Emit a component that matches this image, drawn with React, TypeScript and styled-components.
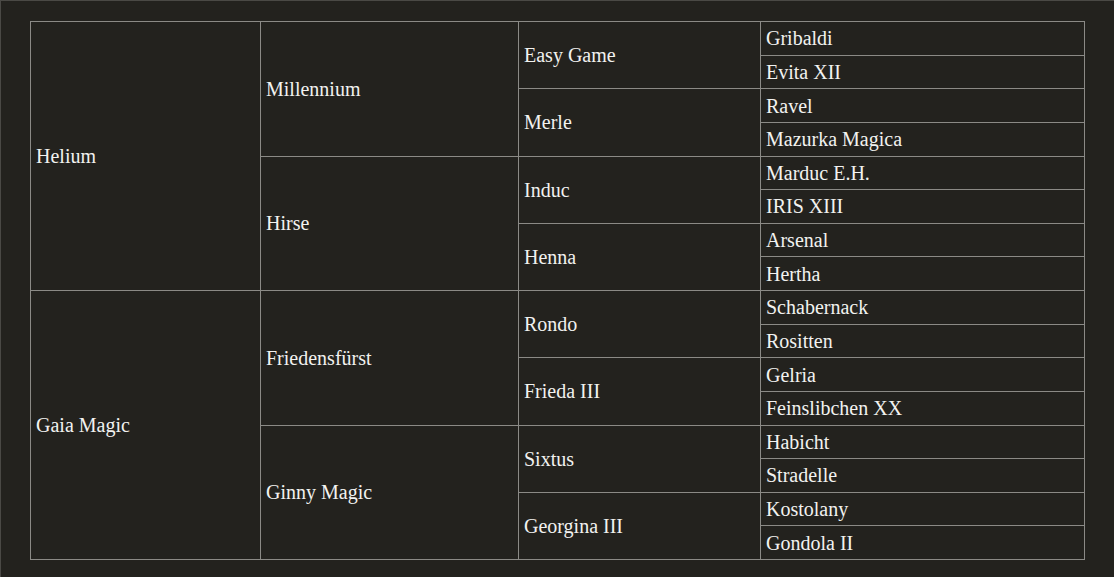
import React, { FC } from 'react';
import styled, { createGlobalStyle } from 'styled-components';

const GlobalStyle = createGlobalStyle`
  html, body {
    margin: 0;
    padding: 0;
    background-color: #23221e;
  }
  body {
    font-family: "Liberation Serif", "Times New Roman", serif;
    color: #f2f2f0;
  }
`;

const Page = styled.div`
  box-sizing: border-box;
  width: 1114px;
  height: 577px;
  padding: 20px 0 0 29px;
  border-top: 1px solid #4a4945;
  border-left: 1px solid #4a4945;
`;

const PedigreeTable = styled.table`
  border-collapse: collapse;
  width: 1055px;
  height: 539px;
  table-layout: fixed;
`;

const Col = styled.col<{ $width: number }>`
  width: ${({ $width }): string => `${$width}px`};
`;

const Cell = styled.td`
  border: 1px solid #8b8a86;
  padding: 0 5px;
  font-size: 20px;
  line-height: 1.1;
  vertical-align: middle;
  white-space: nowrap;
`;

interface Horse {
  name: string;
  parents?: [Horse, Horse];
}

const h = (name: string, sire?: Horse, dam?: Horse): Horse =>
  sire && dam ? { name, parents: [sire, dam] } : { name };

const pedigree: [Horse, Horse] = [
  h(
    'Helium',
    h('Millennium', h('Easy Game', h('Gribaldi'), h('Evita XII')), h('Merle', h('Ravel'), h('Mazurka Magica'))),
    h('Hirse', h('Induc', h('Marduc E.H.'), h('IRIS XIII')), h('Henna', h('Arsenal'), h('Hertha'))),
  ),
  h(
    'Gaia Magic',
    h('Friedensfürst', h('Rondo', h('Schabernack'), h('Rositten')), h('Frieda III', h('Gelria'), h('Feinslibchen XX'))),
    h('Ginny Magic', h('Sixtus', h('Habicht'), h('Stradelle')), h('Georgina III', h('Kostolany'), h('Gondola II'))),
  ),
];

const DEPTH = 4;

// walk the tree once; a cell starts on the row where its first leaf lives
const buildRows = (): { name: string; span: number }[][] => {
  const rows: { name: string; span: number }[][] = Array.from({ length: 16 }, () => []);
  const walk = (horse: Horse, level: number, start: number): void => {
    const span = 2 ** (DEPTH - 1 - level);
    rows[start].push({ name: horse.name, span });
    if (horse.parents) {
      walk(horse.parents[0], level + 1, start);
      walk(horse.parents[1], level + 1, start + span / 2);
    }
  };
  pedigree.forEach((horse, i) => walk(horse, 0, i * 8));
  return rows;
};

const App: FC = () => {
  const rows = buildRows();
  return (
    <>
      <GlobalStyle />
      <Page>
        <PedigreeTable>
          <colgroup>
            <Col $width={230} />
            <Col $width={258} />
            <Col $width={242} />
            <Col $width={324} />
          </colgroup>
          <tbody>
            {rows.map((cells, i) => (
              <tr key={i}>
                {cells.map((cell) => (
                  <Cell key={cell.name} rowSpan={cell.span}>
                    {cell.name}
                  </Cell>
                ))}
              </tr>
            ))}
          </tbody>
        </PedigreeTable>
      </Page>
    </>
  );
};

export default App;
